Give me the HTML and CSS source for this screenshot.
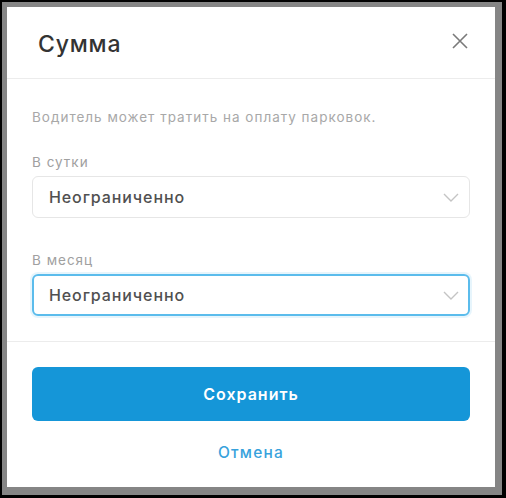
FILE: index.html
```html
<!DOCTYPE html>
<html lang="ru">
<head>
<meta charset="utf-8">
<link rel="stylesheet" href="styles.css">
</head>
<body>
<div class="screen">
  <div class="modal">
    <div class="modal-header">
      <h2 class="modal-title">Сумма</h2>
      <button class="close-btn" aria-label="Закрыть">
        <svg width="16" height="16" viewBox="0 0 16 16"><path d="M1 1L15 15M15 1L1 15" stroke="#7a7a7a" stroke-width="1.6" fill="none"/></svg>
      </button>
    </div>
    <div class="modal-body">
      <p class="hint">Водитель может тратить на оплату парковок.</p>
      <div class="field">
        <label class="field-label">В сутки</label>
        <div class="select">
          <span class="select-value">Неограниченно</span>
          <svg class="chevron" width="16" height="9" viewBox="0 0 16 9"><path d="M1 1L8 8L15 1" stroke="#c4c4c4" stroke-width="1.4" fill="none"/></svg>
        </div>
      </div>
      <div class="field field-second">
        <label class="field-label">В месяц</label>
        <div class="select select-focus">
          <span class="select-value">Неограниченно</span>
          <svg class="chevron" width="16" height="9" viewBox="0 0 16 9"><path d="M1 1L8 8L15 1" stroke="#c4c4c4" stroke-width="1.4" fill="none"/></svg>
        </div>
      </div>
    </div>
    <div class="modal-footer">
      <button class="btn-primary">Сохранить</button>
      <button class="btn-link">Отмена</button>
    </div>
  </div>
</div>
</body>
</html>
```
FILE: styles.css
```css
* { box-sizing: border-box; }
html, body { margin: 0; padding: 0; }
body {
  width: 506px;
  height: 498px;
  background: #000;
  font-family: Inter, "Noto Sans", sans-serif;
}
.screen {
  width: 506px;
  height: 498px;
  border-style: solid;
  border-color: #000;
  border-width: 2px 4px 3px 2px;
  background: #858585;
  padding: 5px 7px 8px 5px;
  display: flex;
}
.modal {
  flex: 1;
  background: #fff;
  display: flex;
  flex-direction: column;
}
.modal-header {
  height: 72px;
  display: flex;
  align-items: center;
  justify-content: space-between;
  padding: 3px 27px 0 31px;
  border-bottom: 1px solid #ececec;
}
.modal-title {
  margin: 0;
  font-size: 23px;
  font-weight: 500;
  color: #333;
  letter-spacing: 0.8px;
}
.close-btn {
  border: 0;
  background: none;
  padding: 0;
  width: 16px;
  height: 16px;
  margin-top: -6px;
  display: flex;
}
.modal-body {
  padding: 28px 25px 0 25px;
  height: 263px;
  border-bottom: 1px solid #ececec;
}
.hint {
  margin: 0;
  font-size: 13.5px;
  line-height: 20px;
  letter-spacing: 1px;
  color: #a8a8a8;
}
.field { margin-top: 26px; }
.field-second { margin-top: 33px; }
.field-label {
  display: block;
  font-size: 13.5px;
  line-height: 18px;
  letter-spacing: 1px;
  color: #a0a0a0;
  margin-bottom: 5px;
}
.select {
  height: 42px;
  border: 1px solid #e6e6e6;
  border-radius: 6px;
  display: flex;
  align-items: center;
  justify-content: space-between;
  padding: 0 10px 0 16px;
}
.select-focus {
  border: 2px solid #5bbcec;
  box-shadow: 0 0 0 2px rgba(91, 188, 236, 0.15);
  padding: 0 9px 0 15px;
}
.select-value {
  font-size: 16px;
  font-weight: 500;
  letter-spacing: 0.9px;
  color: #505050;
}
.modal-footer {
  flex: 1;
  padding: 25px 25px 0 25px;
  display: flex;
  flex-direction: column;
  align-items: stretch;
}
.btn-primary {
  height: 54px;
  border: 0;
  border-radius: 6px;
  background: #1596d8;
  color: #fff;
  font-family: inherit;
  font-size: 16px;
  font-weight: 600;
  letter-spacing: 1px;
}
.btn-link {
  margin-top: 22px;
  align-self: center;
  border: 0;
  background: none;
  font-family: inherit;
  font-size: 15.5px;
  font-weight: 500;
  letter-spacing: 1.2px;
  color: #37a2dc;
  padding: 0;
}
```
